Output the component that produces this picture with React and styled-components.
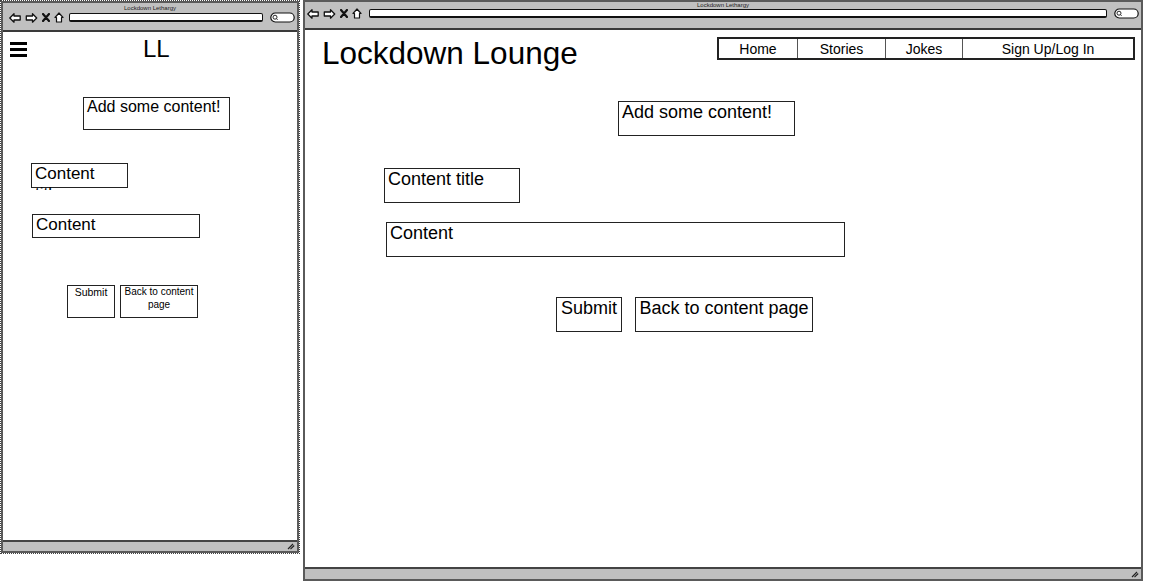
import React from 'react';
import styled, { createGlobalStyle } from 'styled-components';

const Global = createGlobalStyle`
  html, body { margin: 0; padding: 0; background: #fff; }
  body { font-family: "Liberation Sans", Arial, sans-serif; color: #000; }
  * { box-sizing: border-box; }
`;

const Stage = styled.div`
  display: flex;
  align-items: flex-start;
  gap: 3px;
  width: 1149px;
  height: 588px;
  overflow: hidden;
`;

const Selection = styled.div`
  border: 1px dotted #444;
  width: 300px;
  height: 554px;
`;

const Window = styled.div`
  display: flex;
  flex-direction: column;
  width: ${p => p.$w}px;
  height: ${p => p.$h}px;
  border: 2px solid #5a5a5a;
  background: #fff;
`;

const TitleBar = styled.div`
  flex: none;
  height: ${p => p.$h}px;
  background: #c0c0c0;
  border-bottom: 2px solid #3a3a3a;
  display: flex;
  flex-direction: column;
`;

const Caption = styled.div`
  height: ${p => p.$h}px;
  padding-top: ${p => p.$pt}px;
  font-size: 6px;
  line-height: 6px;
  text-align: center;
  color: #222;
  white-space: nowrap;
  overflow: hidden;
`;

const Toolbar = styled.div`
  display: flex;
  align-items: center;
  height: 11px;
  padding: 0 ${p => p.$pr}px 0 ${p => p.$pl}px;
  gap: 4px;
`;

const AddressBar = styled.div`
  flex: 1;
  height: 9px;
  margin: 0 3px 0 ${p => p.$ml}px;
  background: #fff;
  border: 1px solid #111;
  border-bottom-width: 2px;
  border-radius: 2px;
`;

const Content = styled.div`
  flex: 1;
  display: flex;
  flex-direction: column;
  overflow: hidden;
`;

const StatusBar = styled.div`
  flex: none;
  height: ${p => p.$h}px;
  background: #c0c0c0;
  border-top: 2px solid #444;
  display: flex;
  justify-content: flex-end;
  align-items: center;
  padding-right: 2px;
`;

/* ---------- headers ---------- */
const MobileHeader = styled.div`
  display: flex;
  align-items: flex-start;
  height: 30px;
  padding: 5px 0 0 7px;
`;

const Burger = styled.div`
  display: flex;
  flex-direction: column;
  gap: 3px;
  margin-top: 5px;
  width: 17px;
`;

const BurgerBar = styled.span`
  display: block;
  height: 3px;
  background: #000;
`;

const MobileLogo = styled.div`
  margin-left: 116px;
  font-size: 24px;
  line-height: 1;
`;

const DesktopHeader = styled.div`
  display: flex;
  justify-content: space-between;
  align-items: flex-start;
  height: 40px;
  padding: 7px 6px 0 17px;
`;

const SiteTitle = styled.div`
  margin-top: 1px;
  font-size: 31.5px;
  line-height: 1;
`;

const Nav = styled.nav`
  display: flex;
  border: 2px solid #222;
  height: 23px;
`;

const NavItem = styled.div`
  width: ${p => p.$w}px;
  display: flex;
  align-items: center;
  justify-content: center;
  font-size: 14px;
  border-left: ${p => (p.$first ? 'none' : '1px solid #555')};
`;

/* ---------- form ---------- */
const Form = styled.div`
  display: flex;
  flex-direction: column;
  align-items: flex-start;
`;

const Row = styled.div`
  display: flex;
  gap: ${p => p.$gap || 0}px;
  margin-top: ${p => p.$top}px;
  padding-left: ${p => p.$indent}px;
`;

const Box = styled.div`
  width: ${p => p.$w}px;
  height: ${p => p.$h}px;
  border: 1px solid #222;
  padding: 0 ${p => (p.$center ? 0 : 3)}px;
  font-size: ${p => p.$fs}px;
  line-height: ${p => p.$lh || 1.15};
  text-align: ${p => (p.$center ? 'center' : 'left')};
  white-space: ${p => (p.$nowrap ? 'nowrap' : 'normal')};
  overflow: ${p => (p.$spill ? 'visible' : 'hidden')};
  clip-path: ${p => (p.$spill ? 'inset(-1px -1px -2px -1px)' : 'none')};
  background: #fff;
`;

/* ---------- icons ---------- */
const BackIcon = () => (
  <svg width="12" height="10" viewBox="0 0 12 10">
    <polygon points="0.8,5 5,0.8 5,3 11.2,3 11.2,7 5,7 5,9.2" fill="#fff" stroke="#111" strokeWidth="1.3" strokeLinejoin="round" />
  </svg>
);
const FwdIcon = () => (
  <svg width="13" height="10" viewBox="0 0 12 10">
    <polygon points="11.2,5 7,0.8 7,3 0.8,3 0.8,7 7,7 7,9.2" fill="#fff" stroke="#111" strokeWidth="1.3" strokeLinejoin="round" />
  </svg>
);
const CloseIcon = () => (
  <svg width="8" height="9" viewBox="0 0 8 9">
    <path d="M1 1 L7 8 M7 1 L1 8" stroke="#111" strokeWidth="2.2" strokeLinecap="round" />
  </svg>
);
const HomeIcon = () => (
  <svg width="10" height="11" viewBox="0 0 10 11">
    <path d="M1 5.5 L5 1 L9 5.5 L7.5 5.5 L7.5 10 L2.5 10 L2.5 5.5 Z" fill="#fff" stroke="#111" strokeWidth="1.2" strokeLinejoin="round" />
  </svg>
);
const SearchPill = () => (
  <svg width="25" height="11" viewBox="0 0 25 11">
    <rect x="0.8" y="1" width="23.4" height="9" rx="4.5" fill="#fff" stroke="#111" strokeWidth="1.2" />
    <circle cx="5" cy="5.2" r="2" fill="none" stroke="#111" strokeWidth="0.9" />
    <path d="M6.5 6.7 L7.6 7.8" stroke="#111" strokeWidth="0.9" />
  </svg>
);
const Grip = () => (
  <svg width="8" height="7" viewBox="0 0 8 7">
    <path d="M1 6 L6 1 M3.5 6.2 L7.2 2.5" stroke="#222" strokeWidth="1.2" />
  </svg>
);

const Chrome = ({ captionH, captionPt, barH, pl, pr, ml }) => (
  <TitleBar $h={barH}>
    <Caption $h={captionH} $pt={captionPt}>Lockdown Lethargy</Caption>
    <Toolbar $pl={pl} $pr={pr}>
      <BackIcon />
      <FwdIcon />
      <CloseIcon />
      <HomeIcon />
      <AddressBar $ml={ml} />
      <SearchPill />
    </Toolbar>
  </TitleBar>
);

export default function App() {
  return (
    <>
      <Global />
      <Stage>
        <Selection>
          <Window $w={298} $h={552}>
            <Chrome captionH={9} captionPt={2} barH={29} pl={6} pr={2} ml={1} />
            <Content>
              <MobileHeader>
                <Burger>
                  <BurgerBar />
                  <BurgerBar />
                  <BurgerBar />
                </Burger>
                <MobileLogo>LL</MobileLogo>
              </MobileHeader>
              <Form>
                <Row $top={35} $indent={80}>
                  <Box $w={147} $h={33} $fs={16} $nowrap>Add some content!</Box>
                </Row>
                <Row $top={33} $indent={28}>
                  <Box $w={97} $h={25} $fs={17} $spill>Content title</Box>
                </Row>
                <Row $top={26} $indent={29}>
                  <Box $w={168} $h={24} $fs={17}>Content</Box>
                </Row>
                <Row $top={47} $indent={64} $gap={5}>
                  <Box $w={48} $h={33} $fs={10.5} $lh={1.15} $center>Submit</Box>
                  <Box $w={78} $h={33} $fs={10} $lh={1.25} $center>Back to content page</Box>
                </Row>
              </Form>
            </Content>
            <StatusBar $h={11}>
              <Grip />
            </StatusBar>
          </Window>
        </Selection>

        <Window $w={840} $h={581}>
          <Chrome captionH={6} captionPt={0} barH={28} pl={2} pr={2} ml={3} />
          <Content>
            <DesktopHeader>
              <SiteTitle>Lockdown Lounge</SiteTitle>
              <Nav>
                <NavItem $w={78} $first>Home</NavItem>
                <NavItem $w={88}>Stories</NavItem>
                <NavItem $w={77}>Jokes</NavItem>
                <NavItem $w={171}>Sign Up/Log In</NavItem>
              </Nav>
            </DesktopHeader>
            <Form>
              <Row $top={31} $indent={313}>
                <Box $w={177} $h={35} $fs={18} $nowrap>Add some content!</Box>
              </Row>
              <Row $top={32} $indent={79}>
                <Box $w={136} $h={35} $fs={18}>Content title</Box>
              </Row>
              <Row $top={19} $indent={81}>
                <Box $w={459} $h={35} $fs={18}>Content</Box>
              </Row>
              <Row $top={40} $indent={251} $gap={13}>
                <Box $w={66} $h={35} $fs={18} $center>Submit</Box>
                <Box $w={178} $h={35} $fs={18} $center>Back to content page</Box>
              </Row>
            </Form>
          </Content>
          <StatusBar $h={12}>
            <Grip />
          </StatusBar>
        </Window>
      </Stage>
    </>
  );
}
